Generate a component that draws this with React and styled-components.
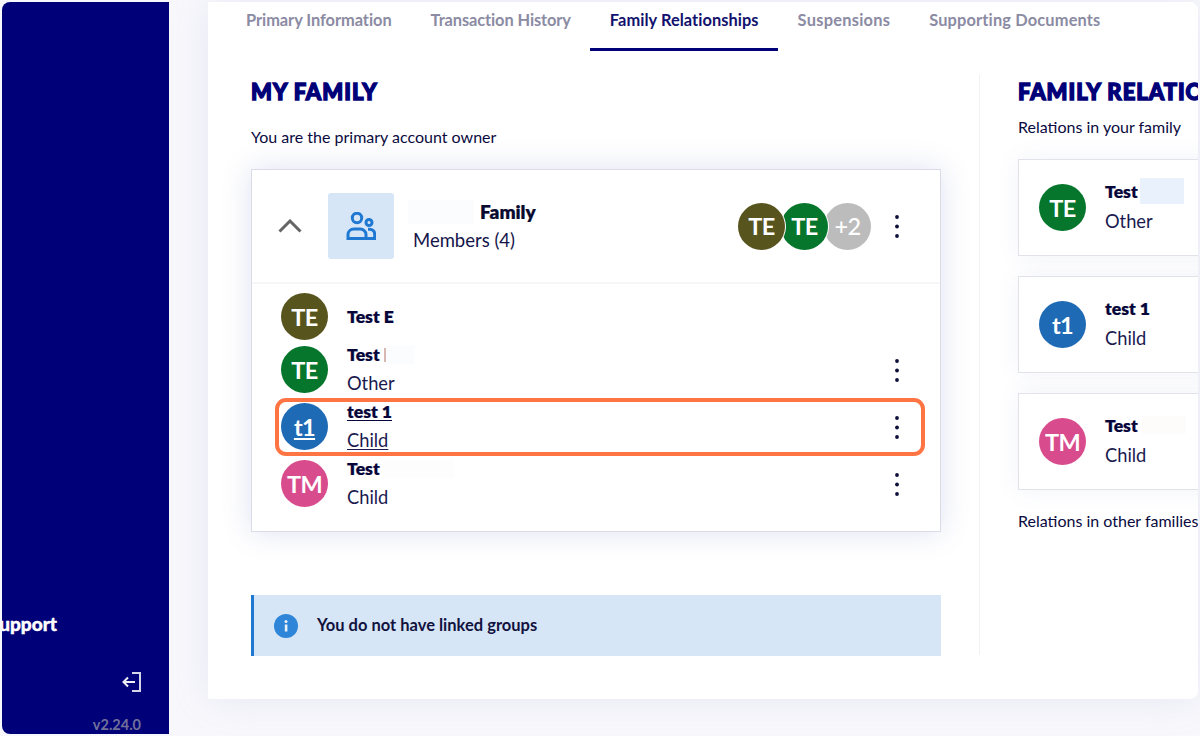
import React from "react";
import styled, { createGlobalStyle } from "styled-components";

const Global = createGlobalStyle`
  html, body { margin: 0; padding: 0; background: #f8f8fc; }
  body { font-family: "Lato", "Liberation Sans", sans-serif; color: #10104a; }
  * { box-sizing: border-box; }
`;

const Page = styled.div`
  width: 1200px; height: 736px; overflow: hidden; display: flex; padding: 2px; position: relative;
  background: #f8f8fc;
`;
const Sidebar = styled.aside`
  width: 167px; height: 732px; background: #000078; border-radius: 8px 0 0 8px; color: #fff;
  display: flex; flex-direction: column; overflow: hidden; flex: none;
  padding-top: 569px;
`;
const SideRule = styled.div`
  width: 139px; height: 1px; background: #d8d8e6;
`;
const SupportLink = styled.div`
  margin-top: 42px; margin-left: -85px; width: 140px; text-align: right; flex: none;
  font-size: 19px; line-height: 22px; font-weight: 900; white-space: nowrap; -webkit-text-stroke: 0.4px #fff;
`;
const LogoutIcon = styled.svg`
  width: 22px; height: 22px; margin: 36px 0 0 118px; display: block; flex: none;
`;
const Version = styled.div`
  width: 139px; text-align: right; margin-top: 23px; font-size: 14.5px; line-height: 18px; font-weight: 700; color: #70709a;
`;
const Main = styled.main`
  width: 990px; height: 697px; margin-left: 39px; background: #fff; overflow: hidden; flex: none;
  border-radius: 0 8px 8px 0;
  box-shadow: 0 0 40px rgba(120,125,190,.14);
  display: flex; flex-direction: column;
`;
const Tabs = styled.nav`
  display: flex; padding-left: 18.5px; height: 49px; flex: none;
`;
const Tab = styled.div`
  padding: 9px 19.5px 0; height: 49px; font-size: 16.4px; line-height: 18px; white-space: nowrap; font-weight: 700;
  letter-spacing: ${p => p.$ls || 0}px;
  color: ${p => (p.$active ? "#12126e" : "#8b8ba3")};
  border-bottom: ${p => (p.$active ? "3px solid #000078" : "none")};
`;
const Content = styled.div`
  display: flex; padding: 24px 0 0 43px; flex: 1; min-height: 0;
`;
const LeftCol = styled.section`
  width: 729px; height: 580px; padding-right: 39px; border-right: 1px solid #f0f0f5; flex: none;
`;
const RightCol = styled.section`
  width: 400px; padding-left: 38px; flex: none; height: 580px;
`;
const Heading = styled.h2`
  margin: 4px 0 0; font-size: 22px; line-height: 26px; font-weight: 900; color: #000078; white-space: nowrap;
  letter-spacing: 1px; -webkit-text-stroke: 1.4px #000078;
`;
const Lead = styled.p`
  margin: ${p => p.$top || 0}px 0 0; font-size: 16px; line-height: 18px; color: #0a0a40; white-space: nowrap;
`;
const FamilyCard = styled.div`
  margin-top: 23px; width: 690px; height: 363px; background: #fff; border: 1px solid #dcdce8;
  box-shadow: 0 0 28px rgba(95,105,190,.2);
`;
const FamilyHead = styled.header`
  height: 114px; display: flex; align-items: center; border-bottom: 2px solid #f6f6f9; padding: 0 40px 0 26px;
`;
const Chevron = styled.svg`
  width: 24px; height: 14px; flex: none; margin-right: 26px;
`;
const IconTile = styled.div`
  width: 66px; height: 66px; border-radius: 3px; background: #d6e6f7; display: flex; align-items: center; justify-content: center; flex: none;
`;
const HeadText = styled.div`
  margin: -1px 0 0 19px; flex: 1; display: flex; flex-direction: column; gap: 8px;
`;
const HeadName = styled.div`
  font-size: 19px; line-height: 20px; font-weight: 800; color: #0a0a30; display: flex; align-items: center; margin-left: -5px;
  gap: 6px; -webkit-text-stroke: 0.2px #0a0a30;
`;
const Members = styled.div`
  font-size: 18.5px; line-height: 20px; color: #15154a;
`;
const Patch = styled.span`
  display: inline-block; width: ${p => p.$w}px; height: ${p => p.$h || 20}px; background: ${p => p.$c || "#fbfcfe"};
  margin: -6px 0 -6px ${p => p.$ml || 0}px;
`;
const AvatarStack = styled.div`
  display: flex; margin-right: 23px;
`;
const Avatar = styled.div`
  width: 47px; height: 47px; border-radius: 50%; background: ${p => p.$bg}; color: #fff; flex: none;
  display: flex; align-items: center; justify-content: center; font-size: 23.5px; font-weight: 700; letter-spacing: -0.6px;
  text-decoration: ${p => (p.$under ? "underline" : "none")}; text-underline-offset: 2px;
`;
const StackAvatar = styled(Avatar)`
  margin-left: ${p => (p.$first ? 0 : -4)}px; position: relative; z-index: ${p => p.$z};
  box-shadow: ${p => (p.$ring ? "1px 0 0 #fff" : "none")};
  font-weight: ${p => (p.$muted ? 500 : 700)};
`;
const Dots = styled.svg`
  width: 6px; height: 24px; flex: none; display: block;
`;
const MemberList = styled.div`
  padding: 8px 40px 0 29px; display: flex; flex-direction: column;
`;
const MemberRow = styled.div`
  height: ${p => (p.$single ? 49 : 57)}px; display: flex; align-items: center;
`;
const MemberText = styled.div`
  margin-left: 19px; flex: 1; display: flex; flex-direction: column; gap: 10px; margin-top: -1px;
`;
const MemberName = styled.div`
  font-size: 17.6px; line-height: 19px; font-weight: 800; color: #06063a; display: flex; align-items: center;
  -webkit-text-stroke: 0.2px #06063a;
  text-decoration: ${p => (p.$under ? "underline" : "none")}; text-underline-offset: 2px;
`;
const MemberRole = styled.div`
  font-size: 18.3px; line-height: 19px; color: #1a1a50;
  text-decoration: ${p => (p.$under ? "underline" : "none")}; text-underline-offset: 2px;
`;
const Alert = styled.div`
  margin-top: 63px; width: 690px; height: 61px; background: #d6e6f6; border-left: 3px solid #1f78d1;
  display: flex; align-items: center; padding: 0 0 2px 20px; gap: 19px;
  font-size: 16.5px; font-weight: 700; color: #12123f;
`;
const InfoIcon = styled.svg`
  width: 24px; height: 24px; flex: none; margin-top: 2px;
`;
const RelCard = styled.div`
  margin-top: ${p => p.$top}px; width: 300px; height: 97px; border: 1px solid #e2e2ea; background: #fff;
  box-shadow: 0 0 22px rgba(95,105,190,.08);
  display: flex; align-items: center; padding-left: 20px;
`;
const RelText = styled.div`
  margin: -3px 0 0 19px; display: flex; flex-direction: column; gap: 11px;
`;
const Highlight = styled.div`
  position: absolute; left: 275px; top: 398px; width: 650px; height: 58px;
  border: 4px solid #ff7443; border-radius: 11px; pointer-events: none;
`;

const DotsIcon = () => (
  <Dots viewBox="0 0 6 24">
    <circle cx="3" cy="3" r="1.9" fill="#0e0e3a" />
    <circle cx="3" cy="12.5" r="1.9" fill="#0e0e3a" />
    <circle cx="3" cy="22" r="1.9" fill="#0e0e3a" />
  </Dots>
);

export default function App() {
  return (
    <Page>
      <Global />
      <Sidebar>
        <SideRule />
        <SupportLink>Support</SupportLink>
        <LogoutIcon viewBox="0 0 22 22" fill="none" stroke="#d5d5e8" strokeWidth="2">
          <path d="M12 2h8v18h-8" />
          <path d="M15 11H3.5M8 6.5 3.5 11 8 15.5" stroke="#eeeef6" />
        </LogoutIcon>
        <Version>v2.24.0</Version>
      </Sidebar>
      <Main>
        <Tabs>
          <Tab $ls={-0.05}>Primary Information</Tab>
          <Tab $ls={-0.1}>Transaction History</Tab>
          <Tab $active $ls={0.05}>Family Relationships</Tab>
          <Tab $ls={0.25}>Suspensions</Tab>
          <Tab $ls={0.15}>Supporting Documents</Tab>
        </Tabs>
        <Content>
          <LeftCol>
            <Heading>MY FAMILY</Heading>
            <Lead $top={23}>You are the primary account owner</Lead>
            <FamilyCard>
              <FamilyHead>
                <Chevron viewBox="0 0 24 14" fill="none" stroke="#666" strokeWidth="3">
                  <path d="M1.5 12.5 12 2l10.5 10.5" />
                </Chevron>
                <IconTile>
                  <svg width="30" height="28" viewBox="0 0 30 28" fill="none" stroke="#1f78d1" strokeWidth="3">
                    <circle cx="11" cy="6" r="4.7" />
                    <circle cx="23" cy="10.5" r="3" />
                    <path d="M2 26.5v-4c0-3.3 2.8-5.5 6-5.5h6c3.2 0 6 2.4 6 5.5v4Z" />
                    <path d="M22 17.3h1.5c3 0 5.2 2 5.2 5v4.2H20" />
                  </svg>
                </IconTile>
                <HeadText>
                  <HeadName>
                    <Patch $w={66} $h={24} />
                    <span>Family</span>
                  </HeadName>
                  <Members>Members (4)</Members>
                </HeadText>
                <AvatarStack>
                  <StackAvatar $first $z={3} $ring $bg="#58541e">TE</StackAvatar>
                  <StackAvatar $z={2} $ring $bg="#06762c">TE</StackAvatar>
                  <StackAvatar $z={1} $muted $bg="#bcbcbc">+2</StackAvatar>
                </AvatarStack>
                <DotsIcon />
              </FamilyHead>
              <MemberList>
                <MemberRow $single>
                  <Avatar $bg="#58541e">TE</Avatar>
                  <MemberText>
                    <MemberName>Test E</MemberName>
                  </MemberText>
                </MemberRow>
                <MemberRow>
                  <Avatar $bg="#06762c">TE</Avatar>
                  <MemberText>
                    <MemberName>
                      Test
                      <Patch $w={2} $h={14} $c="#d8b8b0" $ml={4} />
                      <Patch $w={28} $h={18} />
                    </MemberName>
                    <MemberRole>Other</MemberRole>
                  </MemberText>
                  <DotsIcon />
                </MemberRow>
                <MemberRow>
                  <Avatar $bg="#1f6ab5" $under>t1</Avatar>
                  <MemberText>
                    <MemberName $under>test 1</MemberName>
                    <MemberRole $under>Child</MemberRole>
                  </MemberText>
                  <DotsIcon />
                </MemberRow>
                <MemberRow>
                  <Avatar $bg="#d84c8e">TM</Avatar>
                  <MemberText>
                    <MemberName>
                      Test
                      <Patch $w={70} $h={18} $ml={4} $c="#fdfdfe" />
                    </MemberName>
                    <MemberRole>Child</MemberRole>
                  </MemberText>
                  <DotsIcon />
                </MemberRow>
              </MemberList>
            </FamilyCard>
            <Alert>
              <InfoIcon viewBox="0 0 24 24">
                <circle cx="12" cy="12" r="12" fill="#2f86d8" />
                <rect x="10.8" y="10.5" width="2.6" height="7" fill="#e8f1fb" />
                <circle cx="12" cy="7.5" r="1.5" fill="#e8f1fb" />
              </InfoIcon>
              You do not have linked groups
            </Alert>
          </LeftCol>
          <RightCol>
            <Heading>FAMILY RELATIONSHIPS</Heading>
            <Lead $top={13}>Relations in your family</Lead>
            <RelCard $top={23}>
              <Avatar $bg="#06762c">TE</Avatar>
              <RelText>
                <MemberName>
                  Test
                  <Patch $w={44} $h={26} $c="#e8f1fc" $ml={2} />
                </MemberName>
                <MemberRole>Other</MemberRole>
              </RelText>
            </RelCard>
            <RelCard $top={20}>
              <Avatar $bg="#1f6ab5">t1</Avatar>
              <RelText>
                <MemberName>test 1</MemberName>
                <MemberRole>Child</MemberRole>
              </RelText>
            </RelCard>
            <RelCard $top={20}>
              <Avatar $bg="#d84c8e">TM</Avatar>
              <RelText>
                <MemberName>
                  Test
                  <Patch $w={44} $h={18} $ml={4} $c="#fdfcfb" />
                </MemberName>
                <MemberRole>Child</MemberRole>
              </RelText>
            </RelCard>
            <Lead $top={22}>Relations in other families</Lead>
          </RightCol>
        </Content>
      </Main>
      <Highlight />
    </Page>
  );
}
